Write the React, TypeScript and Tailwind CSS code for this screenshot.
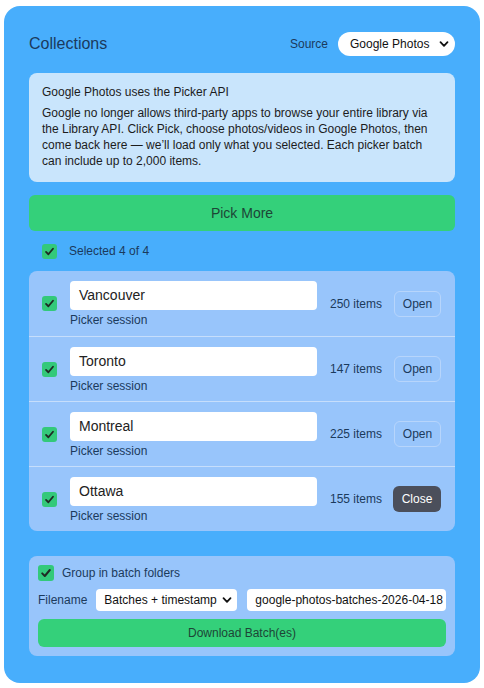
import React from "react";

const font = { fontFamily: '"Liberation Sans", Arial, sans-serif' };

function Check({ size = 15 }: { size?: number }) {
  return (
    <span
      className="inline-flex shrink-0 items-center justify-center rounded-[3px] bg-[#33c97a]"
      style={{ width: size, height: size }}
    >
      <svg width={size - 4} height={size - 4} viewBox="0 0 12 12">
        <path d="M2.2 6.4 L4.8 9 L9.8 3" fill="none" stroke="#1f2a24" strokeWidth="2" strokeLinecap="round" strokeLinejoin="round" />
      </svg>
    </span>
  );
}

function Chevron() {
  return (
    <svg width="10" height="10" viewBox="0 0 10 10">
      <path d="M1.5 3.2 L5 6.8 L8.5 3.2" fill="none" stroke="#111" strokeWidth="1.8" strokeLinecap="round" strokeLinejoin="round" />
    </svg>
  );
}

const rows = [
  { name: "Vancouver", count: 250, open: false },
  { name: "Toronto", count: 147, open: false },
  { name: "Montreal", count: 225, open: false },
  { name: "Ottawa", count: 155, open: true },
];

export default function App() {
  return (
    <div className="bg-white px-[4px] pt-[6px] pb-[6px]" style={font}>
      <div className="rounded-[16px] bg-[#48aefc] px-[25px] pt-[26px] pb-[27px]">
        <div className="flex h-[24px] items-center justify-between">
          <div className="text-[16px] text-[#1b3a5c]">Collections</div>
          <div className="flex items-center gap-[10px]">
            <span className="text-[12px] text-[#1b3a5c]">Source</span>
            <div className="flex h-[24px] w-[117px] items-center justify-between rounded-full bg-white pl-[12px] pr-[6px] text-[12px] text-[#111]">
              <span>Google Photos</span>
              <Chevron />
            </div>
          </div>
        </div>

        <div className="mt-[17px] rounded-[8px] bg-[#c9e5fc] px-[13px] pt-[11px] pb-[13px] text-[12px] leading-[16px] text-[#1c1c1c]">
          <div>Google Photos uses the Picker API</div>
          <div className="mt-[5px]">
            Google no longer allows third-party apps to browse your entire library via the Library API. Click Pick, choose photos/videos in Google Photos, then come back here — we’ll load only what you selected. Each picker batch can include up to 2,000 items.
          </div>
        </div>

        <div className="mt-[13px] flex h-[36px] items-center justify-center rounded-[6px] bg-[#34d07a] text-[14px] text-[#1d4536]">
          Pick More
        </div>

        <div className="mt-[12px] flex h-[16px] items-center gap-[12px] pl-[13px]">
          <Check />
          <span className="text-[12px] text-[#1b3a5c]">Selected 4 of 4</span>
        </div>

        <div className="mt-[12px] rounded-[8px] bg-[#98c5fb]">
          {rows.map((r, i) => (
            <div
              key={r.name}
              className={`flex h-[65px] items-center pl-[13px] pr-[14px] ${i > 0 ? "border-t border-[#c6defb]" : ""}`}
            >
              <Check />
              <div className="ml-[13px] flex min-w-0 flex-1 flex-col pt-[1px]">
                <div className="flex h-[29px] items-center rounded-[4px] bg-white px-[9px] text-[14px] text-[#222]">
                  {r.name}
                </div>
                <div className="mt-[3px] text-[12px] leading-[14px] text-[#1b3a5c]">Picker session</div>
              </div>
              <div className="ml-[13px] shrink-0 whitespace-nowrap text-[12px] text-[#1b3a5c]">{r.count} items</div>
              {r.open ? (
                <div className="ml-[11px] flex h-[26px] w-[48px] shrink-0 items-center justify-center rounded-[6px] bg-[#4b4f5b] text-[12px] text-white">
                  Close
                </div>
              ) : (
                <div className="ml-[12px] flex h-[26px] w-[47px] shrink-0 items-center justify-center rounded-[6px] border border-[#b7d5fb] text-[12px] text-[#1b3a5c]">
                  Open
                </div>
              )}
            </div>
          ))}
        </div>

        <div className="mt-[25px] rounded-[8px] bg-[#98c5fb] px-[9px] pt-[9px] pb-[9px]">
          <div className="flex h-[16px] items-center gap-[8px]">
            <Check size={16} />
            <span className="text-[12px] text-[#1b3a5c]">Group in batch folders</span>
          </div>
          <div className="mt-[8px] flex h-[22px] items-center">
            <span className="text-[12px] text-[#1b3a5c]">Filename</span>
            <div className="ml-[9px] flex h-[22px] w-[141px] shrink-0 items-center justify-between rounded-[4px] bg-white pl-[8px] pr-[5px] text-[12px] text-[#111]">
              <span>Batches + timestamp</span>
              <Chevron />
            </div>
            <div className="ml-[10px] flex h-[22px] min-w-0 flex-1 items-center overflow-hidden whitespace-nowrap rounded-[4px] bg-white pl-[8px] text-[12px] text-[#111]">
              google-photos-batches-2026-04-18
            </div>
          </div>
          <div className="mt-[8px] flex h-[28px] items-center justify-center rounded-[6px] bg-[#34d07a] text-[12px] text-[#1d4536]">
            Download Batch(es)
          </div>
        </div>
      </div>
    </div>
  );
}
